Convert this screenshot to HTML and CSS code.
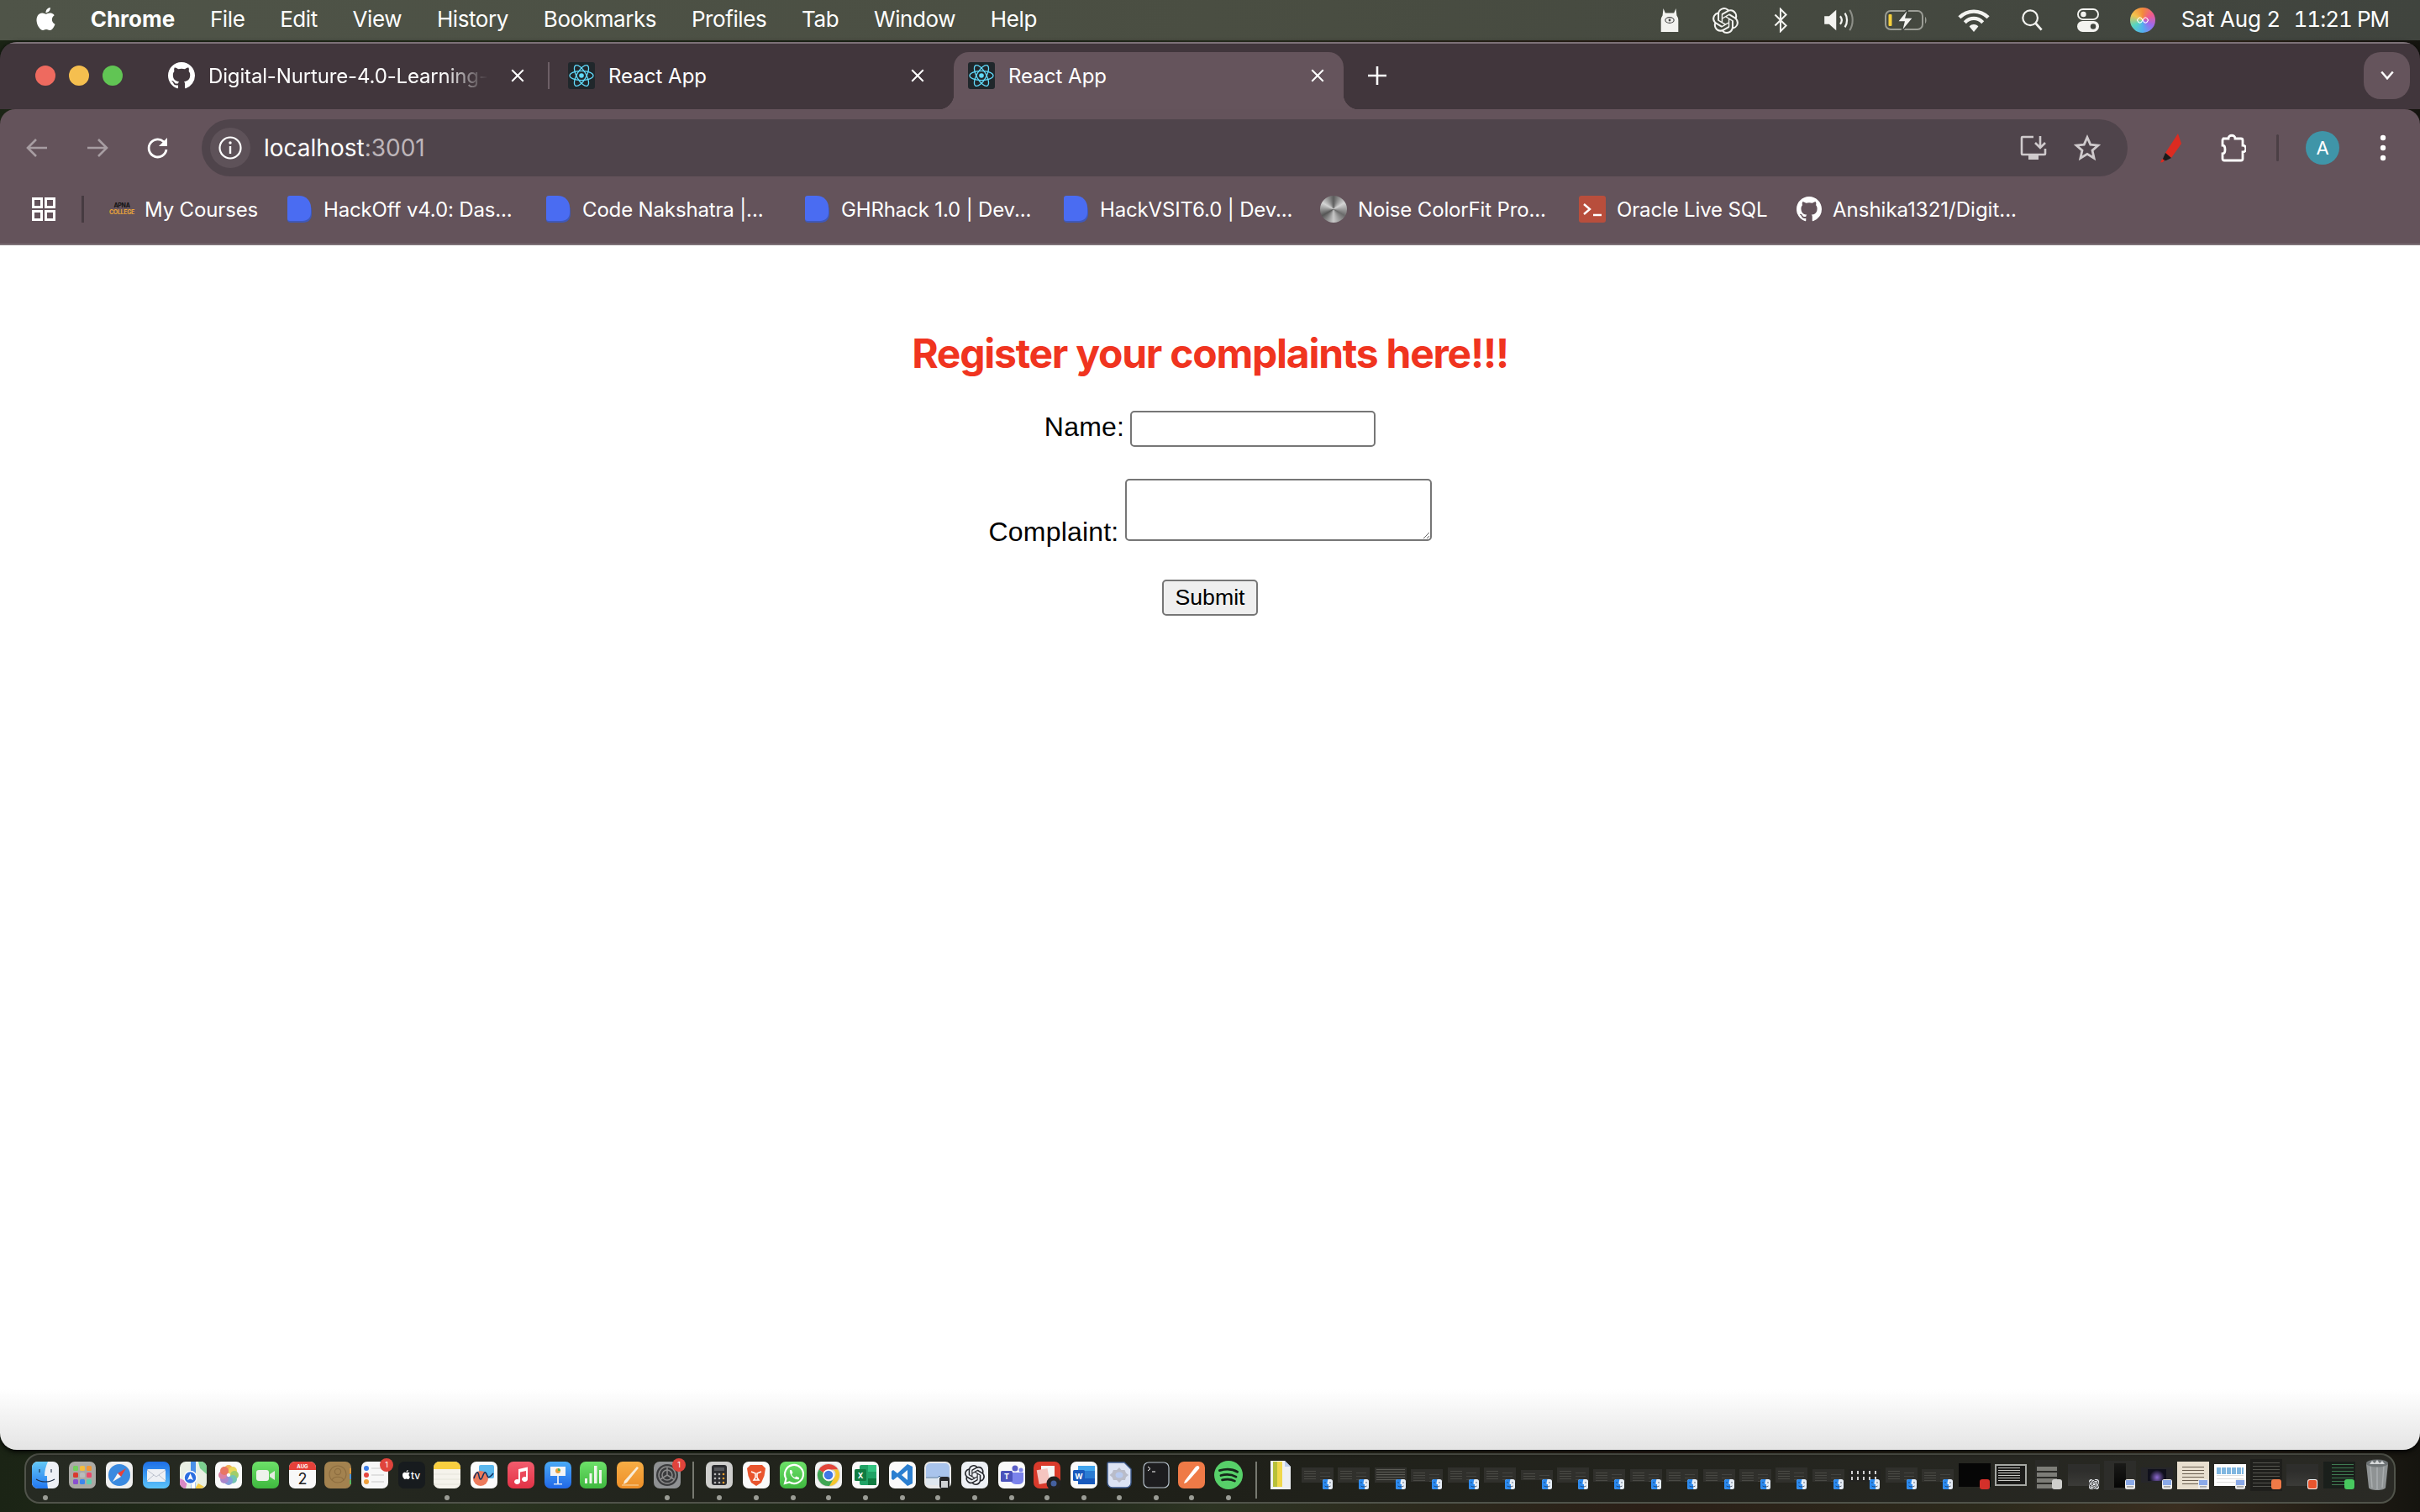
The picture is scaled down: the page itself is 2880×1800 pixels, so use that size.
FILE: index.html
```html
<!DOCTYPE html>
<html lang="en">
<head>
<meta charset="utf-8">
<title>React App</title>
<link rel="stylesheet" href="styles.css">
</head>
<body>
<svg class="defs" width="0" height="0" aria-hidden="true">
  <defs>
    <symbol id="gh" viewBox="0 0 16 16"><path fill="currentColor" d="M8 0C3.58 0 0 3.58 0 8c0 3.54 2.29 6.53 5.47 7.59.4.07.55-.17.55-.38 0-.19-.01-.82-.01-1.49-2.01.37-2.53-.49-2.69-.94-.09-.23-.48-.94-.82-1.13-.28-.15-.68-.52-.01-.53.63-.01 1.08.58 1.23.82.72 1.21 1.87.87 2.33.66.07-.52.28-.87.51-1.07-1.78-.2-3.64-.89-3.64-3.95 0-.87.31-1.59.82-2.15-.08-.2-.36-1.02.08-2.12 0 0 .67-.21 2.2.82.64-.18 1.32-.27 2-.27.68 0 1.36.09 2 .27 1.53-1.04 2.2-.82 2.2-.82.44 1.1.16 1.92.08 2.12.51.56.82 1.27.82 2.15 0 3.07-1.87 3.75-3.65 3.95.29.25.54.73.54 1.48 0 1.07-.01 1.93-.01 2.2 0 .21.15.46.55.38A8.013 8.013 0 0016 8c0-4.42-3.58-8-8-8z"/></symbol>
    <symbol id="react" viewBox="0 0 32 32"><rect width="32" height="32" rx="3" fill="#20272b"/><g fill="none" stroke="#61dafb" stroke-width="1.3"><ellipse cx="16" cy="16" rx="14" ry="5.6"/><ellipse cx="16" cy="16" rx="14" ry="5.6" transform="rotate(60 16 16)"/><ellipse cx="16" cy="16" rx="14" ry="5.6" transform="rotate(120 16 16)"/></g><circle cx="16" cy="16" r="2.8" fill="#61dafb"/></symbol>
    <symbol id="doc" viewBox="0 0 30 32"><path fill="#3f58b8" d="M0 4h14c9 0 15 6 15 14v4c0 6-4 10-10 10H4c-2 0-4-1-4-3z"/><path fill="#4a6cf2" d="M3 0h11c8 0 14 6 14 14v6c0 6-4 10-10 10H3c-2 0-3-1-3-3V3c0-2 1-3 3-3z"/></symbol>
    <symbol id="x" viewBox="0 0 16 16"><path d="M2 2l12 12M14 2L2 14" stroke="currentColor" stroke-width="1.800" fill="none"/></symbol>
    <symbol id="apple" viewBox="0 0 24 24"><path fill="currentColor" d="M12.152 6.896c-.948 0-2.415-1.078-3.96-1.04-2.04.027-3.91 1.183-4.961 3.014-2.117 3.675-.546 9.103 1.519 12.09 1.013 1.454 2.208 3.09 3.792 3.039 1.52-.065 2.09-.987 3.935-.987 1.831 0 2.35.987 3.96.948 1.637-.026 2.676-1.48 3.676-2.948 1.156-1.688 1.636-3.325 1.662-3.415-.039-.013-3.182-1.221-3.22-4.857-.026-3.04 2.48-4.494 2.597-4.559-1.429-2.09-3.623-2.324-4.39-2.376-2-.156-3.675 1.09-4.61 1.09zM15.53 3.83c.843-1.012 1.4-2.427 1.245-3.83-1.207.052-2.662.805-3.532 1.818-.78.896-1.454 2.338-1.273 3.714 1.338.104 2.715-.688 3.559-1.701"/></symbol>
    <symbol id="gpt" viewBox="0 0 24 24"><path fill="currentColor" d="M22.2819 9.8211a5.9847 5.9847 0 0 0-.5157-4.9108 6.0462 6.0462 0 0 0-6.5098-2.9A6.0651 6.0651 0 0 0 4.9807 4.1818a5.9847 5.9847 0 0 0-3.9977 2.9 6.0462 6.0462 0 0 0 .7427 7.0966 5.98 5.98 0 0 0 .511 4.9107 6.051 6.051 0 0 0 6.5146 2.9001A5.9847 5.9847 0 0 0 13.2599 24a6.0557 6.0557 0 0 0 5.7718-4.2058 5.9894 5.9894 0 0 0 3.9977-2.9001 6.0557 6.0557 0 0 0-.7475-7.0729zm-9.022 12.6081a4.4755 4.4755 0 0 1-2.8764-1.0408l.1419-.0804 4.7783-2.7582a.7948.7948 0 0 0 .3927-.6813v-6.7369l2.02 1.1686a.071.071 0 0 1 .038.052v5.5826a4.504 4.504 0 0 1-4.4945 4.4944zm-9.6607-4.1254a4.4708 4.4708 0 0 1-.5346-3.0137l.142.0852 4.783 2.7582a.7712.7712 0 0 0 .7806 0l5.8428-3.3685v2.3324a.0804.0804 0 0 1-.0332.0615L9.74 19.9502a4.4992 4.4992 0 0 1-6.1408-1.6464zM2.3408 7.8956a4.485 4.485 0 0 1 2.3655-1.9728V11.6a.7664.7664 0 0 0 .3879.6765l5.8144 3.3543-2.0201 1.1685a.0757.0757 0 0 1-.071 0l-4.8303-2.7865A4.504 4.504 0 0 1 2.3408 7.872zm16.5963 3.8558L13.1038 8.364 15.1192 7.2a.0757.0757 0 0 1 .071 0l4.8303 2.7913a4.4944 4.4944 0 0 1-.6765 8.1042v-5.6772a.79.79 0 0 0-.407-.667zm2.0107-3.0231l-.142-.0852-4.7735-2.7818a.7759.7759 0 0 0-.7854 0L9.409 9.2297V6.8974a.0662.0662 0 0 1 .0284-.0615l4.8303-2.7866a4.4992 4.4992 0 0 1 6.6802 4.66zM8.3065 12.863l-2.02-1.1638a.0804.0804 0 0 1-.038-.0567V6.0742a4.4992 4.4992 0 0 1 7.3757-3.4537l-.142.0805L8.704 5.459a.7948.7948 0 0 0-.3927.6813zm1.0976-2.3654l2.602-1.4998 2.6069 1.4998v2.9994l-2.5974 1.4997-2.6067-1.4997Z"/></symbol>
    <symbol id="mini-finder" viewBox="0 0 12 12"><rect width="12" height="12" rx="2.500" fill="#e6edf6"/><path d="M2.500 0h4C5.800 2 5.500 4 5.500 6H7c0 2 0 4 .3 6H2.500A2.500 2.500 0 0 1 0 9.500v-7A2.500 2.500 0 0 1 2.500 0z" fill="#2b8af0"/><path d="M3 3v1.800M9 3v1.800M2.500 8c2 1.300 5 1.300 7 0" stroke="#1c2b44" stroke-width=".7" fill="none"/></symbol>
    <symbol id="mini-preview" viewBox="0 0 12 12"><rect width="12" height="12" rx="2.500" fill="#eeeeee"/><rect x="1" y="1" width="10" height="6" fill="#8aa9e8"/><path d="M2 8.500h8M2 10h8" stroke="#888" stroke-width=".7"/></symbol>
    <linearGradient id="g-finder" x1="0" y1="0" x2="0" y2="1"><stop offset="0" stop-color="#64c8f6"/><stop offset="1" stop-color="#2277f0"/></linearGradient>
    <linearGradient id="g-mail" x1="0" y1="0" x2="0" y2="1"><stop offset="0" stop-color="#1d6fe8"/><stop offset="1" stop-color="#5cc4fa"/></linearGradient>
    <linearGradient id="g-green" x1="0" y1="0" x2="0" y2="1"><stop offset="0" stop-color="#6de069"/><stop offset="1" stop-color="#3fb83f"/></linearGradient>
    <linearGradient id="g-music" x1="0" y1="0" x2="0" y2="1"><stop offset="0" stop-color="#f35c6d"/><stop offset="1" stop-color="#e23246"/></linearGradient>
    <linearGradient id="g-key" x1="0" y1="0" x2="0" y2="1"><stop offset="0" stop-color="#4aaaf5"/><stop offset="1" stop-color="#2168e8"/></linearGradient>
    <linearGradient id="g-pages" x1="0" y1="0" x2="0" y2="1"><stop offset="0" stop-color="#f6ad45"/><stop offset="1" stop-color="#ee8f28"/></linearGradient>
  </defs>
</svg>

<header class="menubar">
  <div class="menu-left">
    <svg class="apple"><use href="#apple"/></svg>
    <span class="menu-app">Chrome</span>
    <span>File</span><span>Edit</span><span>View</span><span>History</span><span>Bookmarks</span><span>Profiles</span><span>Tab</span><span>Window</span><span>Help</span>
  </div>
  <div class="menu-right">
    <div class="status-icons">
      <svg class="st" viewBox="0 0 24 32"><path fill="#f3f3f0" d="M4 1l2.500 6h11L20 1l1 9c1.500 2 2 4 2 6v15H1V16c0-2 .5-4 2-6z"/><ellipse cx="12" cy="16" rx="5.500" ry="3.600" fill="none" stroke="#444" stroke-width="1.200"/><circle cx="12" cy="16" r="1.500" fill="#444"/></svg>
      <svg class="st st-gpt"><use href="#gpt"/></svg>
      <svg class="st" viewBox="0 0 20 32"><path d="M3 9l14 14-7 7V2l7 7L3 23" fill="none" stroke="#f3f3f0" stroke-width="2.200"/></svg>
      <svg class="st st-wide" viewBox="0 0 40 32"><path fill="#f3f3f0" d="M1 11h6l9-8v26l-9-8H1z"/><path d="M21 11c2.500 3 2.500 7 0 10M27 7c3.500 5 3.500 13 0 18" fill="none" stroke="#f3f3f0" stroke-width="2.400"/><path d="M33 3c5 7.500 5 18.500 0 26" fill="none" stroke="#8d8f88" stroke-width="2.200"/></svg>
      <svg class="st st-batt" viewBox="0 0 52 28"><rect x="1" y="3" width="44" height="22" rx="6" fill="none" stroke="#9b9d96" stroke-width="2"/><path d="M48 10c2 1 2 7 0 8z" fill="#9b9d96"/><rect x="4.500" y="7" width="4" height="14" rx="1" fill="#f5cf3c"/><path d="M28 0L15 16h8l-3 12 14-17h-9z" fill="#f3f3f0" stroke="#41453f" stroke-width="1.500"/></svg>
      <svg class="st st-wide" viewBox="0 0 36 28"><path d="M2 11c9-9 23-9 32 0M8 16.500c6-6 14-6 20 0" fill="none" stroke="#f3f3f0" stroke-width="4"/><path d="M13 21c3-3 7-3 10 0l-5 6z" fill="#f3f3f0"/></svg>
      <svg class="st" viewBox="0 0 28 30"><circle cx="12" cy="12" r="9.500" fill="none" stroke="#f3f3f0" stroke-width="2.400"/><path d="M19 19l7.500 8.500" stroke="#f3f3f0" stroke-width="3"/></svg>
      <svg class="st" viewBox="0 0 28 30"><rect x="1" y="1" width="26" height="13" rx="6.500" fill="none" stroke="#f3f3f0" stroke-width="2"/><circle cx="8" cy="7.500" r="3.500" fill="#f3f3f0"/><rect x="0" y="16" width="28" height="14" rx="7" fill="#f3f3f0"/><circle cx="20.500" cy="23" r="3.500" fill="#41453f"/></svg>
      <span class="siri"><svg viewBox="0 0 20 20"><path d="M4 10c2-4 4-4 6 0s4 4 6 0c-2-4-4-4-6 0s-4 4-6 0z" fill="none" stroke="#fff" stroke-width="1"/></svg></span>
    </div>
    <span class="clock"><span class="date">Sat Aug 2</span><span class="time">11:21 PM</span></span>
  </div>
</header>

<div class="window">
  <div class="tabstrip">
    <div class="lights"><span class="light red"></span><span class="light yellow"></span><span class="light green"></span></div>
    <div class="tabs">
      <div class="tab">
        <svg class="fav gh-mark"><use href="#gh"/></svg>
        <span class="tab-title"><span class="fade">Digital-Nurture-4.0-Learning-</span></span>
        <svg class="close"><use href="#x"/></svg>
      </div>
      <span class="tab-sep"></span>
      <div class="tab">
        <svg class="fav"><use href="#react"/></svg>
        <span class="tab-title">React App</span>
        <svg class="close"><use href="#x"/></svg>
      </div>
      <span class="tab-sep off"></span>
      <div class="tab active">
        <svg class="fav"><use href="#react"/></svg>
        <span class="tab-title">React App</span>
        <svg class="close"><use href="#x"/></svg>
      </div>
    </div>
    <svg class="newtab" viewBox="0 0 22 22"><path d="M11 0v22M0 11h22" stroke="#fff" stroke-width="2.600"/></svg>
    <div class="tabsearch"><svg viewBox="0 0 16 12"><path d="M2 2l6 7 6-7" fill="none" stroke="#fff" stroke-width="2.200"/></svg></div>
  </div>

  <div class="toolbar">
    <div class="nav">
      <svg viewBox="0 0 32 32"><path d="M28 16H5M15 6L5 16l10 10" fill="none" stroke="#a79da2" stroke-width="2.600"/></svg>
      <svg viewBox="0 0 32 32"><path d="M4 16h23M17 6l10 10-10 10" fill="none" stroke="#a79da2" stroke-width="2.600"/></svg>
      <svg viewBox="0 0 32 32"><path d="M26 18a10.500 10.500 0 1 1-3.500-9.500L26 12" fill="none" stroke="#fff" stroke-width="2.800"/><path d="M27 4v10H17z" fill="#fff"/></svg>
    </div>
    <div class="omnibox">
      <span class="chip"><svg viewBox="0 0 28 28"><circle cx="14" cy="14" r="12.500" fill="none" stroke="#fff" stroke-width="2.200"/><path d="M14 12v9" stroke="#fff" stroke-width="2.400"/><circle cx="14" cy="8" r="1.700" fill="#fff"/></svg></span>
      <span class="url">localhost<span class="port">:3001</span></span>
      <svg class="omni-icon" viewBox="0 0 32 32"><path d="M16 3H3a1 1 0 0 0-1 1v19a1 1 0 0 0 1 1h26a1 1 0 0 0 1-1v-6" fill="none" stroke="#cfcacc" stroke-width="2.600"/><rect x="10" y="24" width="12" height="6" fill="#cfcacc"/><path d="M24 2v13M18 10l6 6 6-6" fill="none" stroke="#cfcacc" stroke-width="2.600"/></svg>
      <svg class="omni-icon" viewBox="0 0 32 32"><path d="M16 3.500l3.800 8.600 9.200.9-7 6.100 2.100 9.200-8.100-4.900-8.100 4.900 2.100-9.200-7-6.100 9.200-.9z" fill="none" stroke="#cfcacc" stroke-width="2.800"/></svg>
    </div>
    <div class="tools">
      <svg viewBox="3 0 32 36"><path d="M27 1l4 12-12 17-7-6z" fill="#dc2b21"/><path d="M12 24l7 6-6 3-5 .5z" fill="#1a1a1a"/><path d="M8 31l3 1.500-2 2.500-3 .5z" fill="#dc2b21"/></svg>
      <svg viewBox="0 0 32 36"><path d="M4 7h7c0-5 8-5 8 0h7a2 2 0 0 1 2 2v6c5 0 5 8 0 8v8a2 2 0 0 1-2 2H6a2 2 0 0 1-2-2v-6c4 0 4-10 0-10V9a2 2 0 0 1 2-2z" fill="none" stroke="#fff" stroke-width="2.800"/></svg>
      <span class="tool-div"></span>
      <span class="avatar">A</span>
      <svg class="kebab" viewBox="0 0 8 32"><circle cx="4" cy="4" r="3.200" fill="#fff"/><circle cx="4" cy="16" r="3.200" fill="#fff"/><circle cx="4" cy="28" r="3.200" fill="#fff"/></svg>
    </div>
  </div>

  <div class="bookmarks">
    <svg class="apps" viewBox="0 0 28 28"><g fill="none" stroke="#fff" stroke-width="3"><rect x="1.500" y="1.500" width="10" height="10"/><rect x="16.500" y="1.500" width="10" height="10"/><rect x="1.500" y="16.500" width="10" height="10"/><rect x="16.500" y="16.500" width="10" height="10"/></g></svg>
    <span class="bm-div"></span>
    <div class="bm bm-first"><span class="apna"><span class="apna-top">APNA</span><span class="apna-bot">COLLEGE</span></span><span>My Courses</span></div>
    <div class="bm"><svg class="bm-ic"><use href="#doc"/></svg><span>HackOff v4.0: Das...</span></div>
    <div class="bm"><svg class="bm-ic"><use href="#doc"/></svg><span>Code Nakshatra |...</span></div>
    <div class="bm"><svg class="bm-ic"><use href="#doc"/></svg><span>GHRhack 1.0 | Dev...</span></div>
    <div class="bm bm-short"><svg class="bm-ic"><use href="#doc"/></svg><span>HackVSIT6.0 | Dev...</span></div>
    <div class="bm"><span class="disc"></span><span>Noise ColorFit Pro...</span></div>
    <div class="bm bm-oracle"><span class="oracle"><svg viewBox="0 0 32 32"><path d="M6 10l7 6-7 6" fill="none" stroke="#fff" stroke-width="2.400"/><path d="M17 23h10" stroke="#fff" stroke-width="2.400"/></svg></span><span>Oracle Live SQL</span></div>
    <div class="bm bm-last"><svg class="bm-ic gh-mark"><use href="#gh"/></svg><span>Anshika1321/Digit...</span></div>
  </div>

  <main class="page">
    <h1 class="title">Register your complaints here!!!</h1>
    <form class="form">
      <div class="row row-name"><label>Name: <input class="field" type="text"></label></div>
      <div class="row row-complaint"><label>Complaint: <textarea class="area"></textarea></label></div>
      <button class="submit" type="button">Submit</button>
    </form>
  </main>
</div>

<footer class="dock">
  <div class="item on"><svg class="ic" viewBox="0 0 32 32"><rect width="32" height="32" rx="7" fill="#eef1f6"/><path d="M7 0h12c-2.500 6-4 11-4 17h3c0 6 .3 10 1 15H7a7 7 0 0 1-7-7V7a7 7 0 0 1 7-7z" fill="url(#g-finder)"/><path d="M9 9v4M23 9v4M5 21c6 4 16 4 22 0" stroke="#1d2c44" stroke-width="1.100" fill="none"/></svg><i></i></div>
  <div class="item"><svg class="ic" viewBox="0 0 32 32"><rect width="32" height="32" rx="7" fill="#aaaaa5"/><rect x="5" y="5" width="6" height="6" rx="1.500" fill="#72cf5d"/><rect x="13" y="5" width="6" height="6" rx="1.500" fill="#f3bd3f"/><rect x="21" y="5" width="6" height="6" rx="1.500" fill="#ef9636"/><rect x="5" y="13" width="6" height="6" rx="1.500" fill="#d9392f"/><rect x="13" y="13" width="6" height="6" rx="1.500" fill="#b9bcbc"/><rect x="21" y="13" width="6" height="6" rx="1.500" fill="#e9496a"/><rect x="5" y="21" width="6" height="6" rx="1.500" fill="#8a4fd0"/><rect x="13" y="21" width="6" height="6" rx="1.500" fill="#3c86ee"/><rect x="21" y="21" width="6" height="6" rx="1.500" fill="#5ed0b0"/></svg><i class="off"></i></div>
  <div class="item"><svg class="ic" viewBox="0 0 32 32"><rect width="32" height="32" rx="7" fill="#f0f0f0"/><circle cx="16" cy="16" r="13" fill="#3a8ae0"/><path d="M24 8l-10 6 4 4z" fill="#e8413a"/><path d="M8 24l10-6-4-4z" fill="#f5f5f5"/></svg><i class="off"></i></div>
  <div class="item"><svg class="ic" viewBox="0 0 32 32"><rect width="32" height="32" rx="7" fill="url(#g-mail)"/><rect x="5" y="9" width="22" height="15" rx="1.500" fill="#eef0f4"/><path d="M5 10l11 8 11-8M5 23l8-7M27 23l-8-7" fill="none" stroke="#b5bcc8" stroke-width=".9"/></svg><i class="off"></i></div>
  <div class="item"><svg class="ic" viewBox="0 0 32 32"><rect width="32" height="32" rx="7" fill="#e9f0e4"/><path d="M22 0h3a7 7 0 0 1 7 7v8L24 8z" fill="#7bcf8f"/><path d="M0 20l9 4-2 8a7 7 0 0 1-7-7z" fill="#d988c5"/><path d="M18 32l4-6 7 4-4 2z" fill="#f3cc46"/><path d="M13 0h6v32h-6z" fill="#4a90e8"/><path d="M16 32V22" stroke="#fff" stroke-width="5"/><circle cx="12.500" cy="19" r="7.500" fill="#2b6fe0" stroke="#fff" stroke-width="1.500"/><path d="M12.500 14l3.500 8-3.500-1.500L9 22z" fill="#fff"/></svg><i class="off"></i></div>
  <div class="item tight"><svg class="ic" viewBox="0 0 32 32"><rect width="32" height="32" rx="7" fill="#fafafa"/><g opacity=".85"><circle cx="16" cy="9" r="5" fill="#f1a53c"/><circle cx="21" cy="11" r="5" fill="#e8d13f"/><circle cx="23" cy="16" r="5" fill="#92c652"/><circle cx="21" cy="21" r="5" fill="#5cbba7"/><circle cx="16" cy="23" r="5" fill="#6d8fd7"/><circle cx="11" cy="21" r="5" fill="#9b72c4"/><circle cx="9" cy="16" r="5" fill="#d66b94"/><circle cx="11" cy="11" r="5" fill="#e55f4a"/></g></svg><i class="off"></i></div>
  <div class="item"><svg class="ic" viewBox="0 0 32 32"><rect width="32" height="32" rx="7" fill="url(#g-green)"/><rect x="5" y="10" width="15" height="13" rx="3" fill="#eef3ec"/><path d="M21 15l6-4v11l-6-4z" fill="#e4ebe2"/></svg><i class="off"></i></div>
  <div class="item"><svg class="ic" viewBox="0 0 32 32"><rect width="32" height="32" rx="7" fill="#f8f8f8"/><path d="M7 0h18a7 7 0 0 1 7 7v3H0V7a7 7 0 0 1 7-7z" fill="#e5413a"/><text class="cal-m" x="16" y="8" text-anchor="middle">AUG</text><text class="cal-d" x="16" y="27" text-anchor="middle">2</text></svg><i class="off"></i></div>
  <div class="item tight"><svg class="ic" viewBox="0 0 32 32"><rect width="32" height="32" rx="7" fill="#a3824f"/><rect x="30" y="8" width="2" height="6" fill="#e29a3c"/><rect x="30" y="15" width="2" height="6" fill="#4c95d8"/><rect x="30" y="22" width="2" height="5" fill="#5cb860"/><circle cx="16" cy="15" r="10" fill="none" stroke="#8d6e40" stroke-width="1.200"/><circle cx="16" cy="12" r="3.600" fill="none" stroke="#8d6e40" stroke-width="1.200"/><path d="M9 22c2-5 12-5 14 0" fill="none" stroke="#8d6e40" stroke-width="1.200"/></svg><i class="off"></i></div>
  <div class="item"><svg class="ic" viewBox="0 0 32 32"><rect width="32" height="32" rx="7" fill="#f7f7f7"/><circle cx="6" cy="8" r="3" fill="#3d7ee8"/><circle cx="6" cy="16" r="3" fill="#e5453f"/><circle cx="6" cy="24" r="3" fill="#ef9f3b"/><path d="M12 8h15M12 16h15M12 24h15" stroke="#c9c9c9" stroke-width="1"/></svg><i class="off"></i><span class="badge">1</span></div>
  <div class="item"><svg class="ic" viewBox="0 0 32 32"><rect width="32" height="32" rx="7" fill="#171b1e"/><svg x="4" y="9" width="11" height="13" viewBox="0 0 24 24"><use href="#apple" color="#fff"/></svg><text class="tv" x="15" y="21">tv</text></svg><i class="off"></i></div>
  <div class="item tight on"><svg class="ic" viewBox="0 0 32 32"><rect width="32" height="32" rx="7" fill="#f5f3ec"/><path d="M7 0h18a7 7 0 0 1 7 7v2H0V7a7 7 0 0 1 7-7z" fill="#f9cf3f"/><path d="M0 15h32M0 21h32M0 27h32" stroke="#e1dfd8" stroke-width=".8"/></svg><i></i></div>
  <div class="item"><svg class="ic" viewBox="0 0 32 32"><rect width="32" height="32" rx="7" fill="#fbfbfb"/><rect x="10" y="4" width="18" height="16" rx="2" fill="#5bb8ee"/><circle cx="12" cy="20" r="9" fill="#ec7a5c"/><path d="M4 20c3-9 5-9 6-3s3 5 5-1 4-2 5 1 4 1 7-3" fill="none" stroke="#12305f" stroke-width="1.500"/></svg><i class="off"></i></div>
  <div class="item"><svg class="ic" viewBox="0 0 32 32"><rect width="32" height="32" rx="7" fill="url(#g-music)"/><path d="M13 9l11-2.500V21a3.500 3 0 1 1-2-2.700V11l-7 1.600V24a3.500 3 0 1 1-2-2.700z" fill="#fff"/></svg><i class="off"></i></div>
  <div class="item"><svg class="ic" viewBox="0 0 32 32"><rect width="32" height="32" rx="7" fill="url(#g-key)"/><rect x="7" y="6" width="18" height="11" fill="#f5f5f5"/><circle cx="16" cy="11" r="3" fill="#e8a03c"/><path d="M16 8v3h3a3 3 0 0 0-3-3z" fill="#4cb25a"/><path d="M15 17h2v9h-2zM11 26h10v1.500H11z" fill="#d8e2f2"/></svg><i class="off"></i></div>
  <div class="item tight"><svg class="ic" viewBox="0 0 32 32"><rect width="32" height="32" rx="7" fill="url(#g-green)"/><path d="M6 26v-6h3v6zM11.500 26V14h3v12zM17 26V5h3.500v21zM23 26V10h3v16z" fill="#f0f5ec"/></svg><i class="off"></i></div>
  <div class="item"><svg class="ic" viewBox="0 0 32 32"><rect width="32" height="32" rx="7" fill="url(#g-pages)"/><path d="M24 6l2 1.500L12 25l-4 2 1-4z" fill="#f8ecd8"/><path d="M6 28h20" stroke="#f8d8a8" stroke-width="1"/></svg><i class="off"></i></div>
  <div class="item on"><svg class="ic" viewBox="0 0 32 32"><rect width="32" height="32" rx="7" fill="#8f9193"/><circle cx="16" cy="16" r="13" fill="#3a3b3d"/><circle cx="16" cy="16" r="10" fill="none" stroke="#8c8c8c" stroke-width="1.500"/><circle cx="16" cy="16" r="6" fill="none" stroke="#8c8c8c" stroke-width="1.500"/><path d="M16 16V7M16 16l-8 5M16 16l8 5" stroke="#8c8c8c" stroke-width="1.500"/></svg><i></i><span class="badge">1</span></div>
  <span class="dock-sep"></span>
  <div class="item on"><svg class="ic" viewBox="0 0 32 32"><rect width="32" height="32" rx="7" fill="#cfcfcd"/><rect x="7" y="4" width="18" height="24" rx="3" fill="#2c2d30"/><rect x="10" y="7" width="12" height="4" fill="#55575a"/><g fill="#b8b8b8"><circle cx="11" cy="15" r="1.300"/><circle cx="16" cy="15" r="1.300"/><circle cx="11" cy="20" r="1.300"/><circle cx="16" cy="20" r="1.300"/><circle cx="11" cy="25" r="1.300"/><circle cx="16" cy="25" r="1.300"/></g><g fill="#f0a030"><circle cx="21" cy="15" r="1.300"/><circle cx="21" cy="20" r="1.300"/><circle cx="21" cy="25" r="1.300"/></g></svg><i></i></div>
  <div class="item on"><svg class="ic" viewBox="0 0 32 32"><rect width="32" height="32" rx="7" fill="#fafafa"/><path d="M9 4h14l4 4-1.500 9L22 25l-6 4-6-4-3.500-8L5 8z" fill="#e9552e"/><path d="M10 12l5 2v5l-2 3h6l-2-3v-5l5-2" fill="none" stroke="#fff" stroke-width="1.500"/></svg><i></i></div>
  <div class="item on"><svg class="ic" viewBox="0 0 32 32"><rect width="32" height="32" rx="7" fill="url(#g-green)"/><path d="M6 26l1.500-5.500A11 11 0 1 1 11.500 24.500z" fill="none" stroke="#fff" stroke-width="2.200"/><path d="M12 10l2 0 1.500 3.500-1.500 1.500c1 2 2 3 4 4l1.500-1.500 3.500 1.500v2c-5 2-12-5-11-11z" fill="#fff"/></svg><i></i></div>
  <div class="item tight on"><svg class="ic" viewBox="0 0 32 32"><rect width="32" height="32" rx="7" fill="#f2f2f2"/><circle cx="16" cy="16" r="14" fill="#d8d8d8"/><path d="M16 3a13 13 0 0 1 11.300 6.500H16a6.500 6.500 0 0 0-6 4L4.700 9.500A13 13 0 0 1 16 3z" fill="#e2453a"/><path d="M27.300 9.500A13 13 0 0 1 17 29l5.600-9.600A6.500 6.500 0 0 0 21.600 9.500z" fill="#f5c62c"/><path d="M4.700 9.500A13 13 0 0 0 17 29l5.600-9.600a6.500 6.500 0 0 1-12.500-5.900z" fill="#3fa653"/><circle cx="16" cy="16" r="6.800" fill="#fff"/><circle cx="16" cy="16" r="5.300" fill="#3f78e6"/></svg><i></i></div>
  <div class="item on"><svg class="ic" viewBox="0 0 32 32"><rect width="32" height="32" rx="7" fill="#fafafa"/><rect x="9" y="4" width="20" height="24" rx="2" fill="#21a366"/><rect x="19" y="4" width="10" height="8" fill="#33c481"/><rect x="19" y="20" width="10" height="8" fill="#107c41"/><rect x="3" y="9" width="14" height="14" rx="1.500" fill="#107c41"/><text class="tile-l" x="10" y="20" text-anchor="middle">X</text></svg><i></i></div>
  <div class="item on"><svg class="ic" viewBox="0 0 32 32"><rect width="32" height="32" rx="7" fill="#fafafa"/><path d="M22 3l6 3v20l-6 3L10 18l-5 4-2-1.500v-9L5 10l5 4z" fill="#2b7fd0"/><path d="M22 10l-7 6 7 6z" fill="#fafafa"/></svg><i></i></div>
  <div class="item tight on"><svg class="ic" viewBox="0 0 32 32"><rect width="32" height="32" rx="7" fill="#e9e9e9"/><rect x="2" y="2" width="28" height="26" rx="5" fill="#a9c4ec"/><rect x="2" y="18" width="28" height="10" fill="#dfe7ef"/><path d="M2 19h14l2-2 2 2h10" stroke="#3f6a9a" fill="none"/><rect x="18" y="18" width="12" height="14" rx="3" fill="#26272a"/><rect x="20" y="23" width="8" height="8" fill="#cfd1d4"/></svg><i></i></div>
  <div class="item on"><svg class="ic" viewBox="0 0 32 32"><rect width="32" height="32" rx="7" fill="#eef1f5"/><svg x="4" y="4" width="24" height="24" color="#24262b"><use href="#gpt"/></svg></svg><i></i></div>
  <div class="item on"><svg class="ic" viewBox="0 0 32 32"><rect width="32" height="32" rx="7" fill="#fafafa"/><circle cx="20" cy="8" r="3.500" fill="#5b5fc7"/><circle cx="27" cy="10" r="2.500" fill="#7b83eb"/><path d="M14 13h16v9a5 5 0 0 1-5 5h-4a7 7 0 0 1-7-7z" fill="#7b83eb"/><rect x="3" y="11" width="14" height="13" rx="1.500" fill="#4b53bc"/><text class="tile-l" x="10" y="21" text-anchor="middle">T</text></svg><i></i></div>
  <div class="item tight on"><svg class="ic" viewBox="0 0 32 32"><rect width="32" height="32" rx="7" fill="#d93a2b"/><rect x="9" y="5" width="16" height="20" fill="#f5f5f5"/><rect x="5" y="9" width="13" height="17" fill="#f5c5c0" transform="rotate(-10 11 17)"/><circle cx="24" cy="26" r="8.500" fill="#222"/><circle cx="24" cy="26" r="3.500" fill="#4460a0"/></svg><i></i></div>
  <div class="item on"><svg class="ic" viewBox="0 0 32 32"><rect width="32" height="32" rx="7" fill="#fafafa"/><rect x="9" y="5" width="20" height="22" rx="2" fill="#2b7cd3"/><rect x="9" y="5" width="20" height="6" fill="#41a5ee"/><rect x="9" y="20" width="20" height="7" fill="#185abd"/><rect x="3" y="10" width="14" height="13" rx="1.500" fill="#185abd"/><text class="tile-l" x="10" y="20.500" text-anchor="middle">W</text></svg><i></i></div>
  <div class="item tight on"><svg class="ic" viewBox="0 0 32 32"><path d="M3 1h19l8 8v16a6 6 0 0 1-6 6H8a6 6 0 0 1-6-6V2z" fill="#dce3f4" stroke="#3d5a8c" stroke-width="1.400"/><path d="M16 7l2.500 3h4l1.500 3.500 3 2.500-3 2.500L23 22h-4l-3 3-3-3H9l-1.500-3.500L4.500 16l3-2.500L9 10h4z" fill="#b9bcc9"/><ellipse cx="16" cy="16" rx="4.500" ry="3.500" fill="#b7c9ee"/></svg><i></i></div>
  <div class="item on"><svg class="ic" viewBox="0 0 32 32"><rect x="1" y="1" width="30" height="30" rx="6" fill="#1d1d1f" stroke="#b5c0ca" stroke-width="1.200"/><path d="M6 6l3 2.500L6 11" fill="none" stroke="#fff" stroke-width="1"/><path d="M11 12h4" stroke="#fff" stroke-width="1"/></svg><i></i></div>
  <div class="item tight on"><svg class="ic" viewBox="0 0 32 32"><rect width="32" height="32" rx="7" fill="#ef7a47"/><path d="M23 5c2 0 3 2 2 3.500L14 21l-4 4-3 1 1-3 3-4L21 6z" fill="#fff"/></svg><i></i></div>
  <div class="item on"><svg class="ic ic-round" viewBox="0 0 32 32"><circle cx="16" cy="16" r="16" fill="#57d069"/><path d="M6 11c7-2 14-2 20 1.500M7.500 16.500c6-1.600 12-1.200 17 1.500M9 21.500c5-1.200 10-1 14 1.200" fill="none" stroke="#16261a" stroke-width="2.600" stroke-linecap="round"/></svg><i></i></div>
  <span class="dock-sep wide"></span>
  <svg class="zipdoc" viewBox="0 0 26 36"><path d="M1 1h17l7 7v27H1z" fill="#eef0f2"/><rect x="4" y="2" width="5" height="30" fill="#b7c03a"/><rect x="9" y="2" width="6" height="30" fill="#f0d84a"/><path d="M18 1v7h7" fill="#bccdea"/></svg>
  <div class="thumbs">
    <div class="thumb"><span class="shot"></span><svg class="mini"><use href="#mini-finder"/></svg></div>
    <div class="thumb"><span class="shot"></span><svg class="mini"><use href="#mini-finder"/></svg></div>
    <div class="thumb"><span class="shot dense"></span><svg class="mini"><use href="#mini-finder"/></svg></div>
    <div class="thumb"><span class="shot low"></span><svg class="mini"><use href="#mini-finder"/></svg></div>
    <div class="thumb"><span class="shot"></span><svg class="mini"><use href="#mini-finder"/></svg></div>
    <div class="thumb"><span class="shot"></span><svg class="mini"><use href="#mini-finder"/></svg></div>
    <div class="thumb"><span class="shot lower"></span><svg class="mini"><use href="#mini-finder"/></svg></div>
    <div class="thumb"><span class="shot"></span><svg class="mini"><use href="#mini-finder"/></svg></div>
    <div class="thumb"><span class="shot low"></span><svg class="mini"><use href="#mini-finder"/></svg></div>
    <div class="thumb"><span class="shot low"></span><svg class="mini"><use href="#mini-finder"/></svg></div>
    <div class="thumb"><span class="shot low"></span><svg class="mini"><use href="#mini-finder"/></svg></div>
    <div class="thumb"><span class="shot low"></span><svg class="mini"><use href="#mini-finder"/></svg></div>
    <div class="thumb"><span class="shot low"></span><svg class="mini"><use href="#mini-finder"/></svg></div>
    <div class="thumb"><span class="shot"></span><svg class="mini"><use href="#mini-finder"/></svg></div>
    <div class="thumb"><span class="shot low"></span><svg class="mini"><use href="#mini-finder"/></svg></div>
    <div class="thumb"><span class="shot dots"></span><svg class="mini"><use href="#mini-finder"/></svg></div>
    <div class="thumb"><span class="shot"></span><svg class="mini"><use href="#mini-finder"/></svg></div>
    <div class="thumb"><span class="shot low"></span><svg class="mini"><use href="#mini-finder"/></svg></div>
    <div class="thumb"><span class="shot black"></span><span class="mini mini-red"></span></div>
    <div class="thumb"><span class="shot term"></span></div>
    <div class="thumb"><span class="shot calc"></span><span class="mini mini-calc"></span></div>
    <div class="thumb"><span class="shot blank"></span><span class="mini mini-gpt"><svg><use href="#gpt"/></svg></span></div>
    <div class="thumb"><span class="shot phone"></span><svg class="mini"><use href="#mini-preview"/></svg></div>
    <div class="thumb"><span class="shot purple"></span><svg class="mini"><use href="#mini-preview"/></svg></div>
    <div class="thumb"><span class="shot paper"></span><svg class="mini"><use href="#mini-preview"/></svg></div>
    <div class="thumb"><span class="shot sheet"></span><svg class="mini"><use href="#mini-preview"/></svg></div>
    <div class="thumb"><span class="shot tallest"></span><span class="mini mini-orange"></span></div>
    <div class="thumb"><span class="shot blank"></span><span class="mini mini-brave"></span></div>
    <div class="thumb"><span class="shot chat"></span><span class="mini mini-wa"></span></div>
  </div>
  <svg class="trash" viewBox="0 0 28 38"><path d="M1 6c3 2 23 2 26 0l-3 28c-1 4-19 4-20 0z" fill="#8f9394"/><path d="M6 8l2 26M14 9v27M22 8l-2 26" stroke="#a9adae" stroke-width="1.500"/><ellipse cx="14" cy="5" rx="13" ry="4.500" fill="#6f7476"/><path d="M5 6l3-4 3 3 3-4 3 4 3-3 3 4z" fill="#d6d8d9"/></svg>
</footer>
</body>
</html>
```

FILE: styles.css
```css
* { box-sizing: border-box; }
html, body { margin: 0; height: 100%; }
body {
  width: 2880px;
  height: 1800px;
  overflow: hidden;
  display: flex;
  flex-direction: column;
  font-family: Inter, "Liberation Sans", sans-serif;
  background: linear-gradient(90deg, #1b2415 0%, #2a3320 20%, #1c2417 40%, #2d3423 50%, #2b1f17 68%, #2c2a1c 82%, #3a2e20 90%, #15140f 100%);
}
.defs { position: absolute; }

/* menu bar */
.menubar {
  height: 48px;
  flex: none;
  display: flex;
  justify-content: space-between;
  align-items: center;
  color: #fff;
  background: linear-gradient(90deg, #4f5448 0%, #4a4e42 50%, #40443e 100%);
  font-size: 26px;
}
.menu-left { display: flex; align-items: center; gap: 41.700px; padding-left: 41px; margin-top: -3px; letter-spacing: -.4px; }
.apple { width: 27px; height: 31px; color: #fff; margin-top: -1px; margin-right: -2px; }
.menu-app { font-weight: 700; letter-spacing: 0; }
.menu-right { display: flex; align-items: center; padding-right: 37px; }
.status-icons {
  display: grid;
  grid-template-columns: 66px 68px 62px 78px 82px 78px 60px 74px 56px;
  justify-items: center;
  align-items: center;
  color: #f3f3f0;
}
.st { width: 26px; height: 30px; display: block; }
.st-gpt { width: 31px; height: 31px; }
.st-wide { width: 40px; height: 30px; }
.st-batt { width: 52px; height: 28px; }
.siri {
  width: 30px; height: 30px; border-radius: 50%;
  background: conic-gradient(#f28a3c, #ef5a8d, #9a6af0, #52b0f0, #57d6c0, #f4c24d, #f28a3c);
  display: flex; align-items: center; justify-content: center;
}
.siri svg { width: 22px; height: 22px; }
.clock { display: flex; gap: 16px; margin: -3px 0 0 18px; }
.date { letter-spacing: -.2px; }
.time { font-variant-numeric: tabular-nums; letter-spacing: -1px; }

/* window */
.window {
  flex: none;
  height: 1676px;
  margin-top: 2px;
  display: flex;
  flex-direction: column;
  border-radius: 20px;
  overflow: hidden;
  box-shadow: 0 2px 6px #000;
  position: relative;
}
.tabstrip {
  height: 80px;
  flex: none;
  display: flex;
  background: #41363c;
  box-shadow: inset 0 2px 0 #7c7177;
  padding: 12px 12px 0 42px;
}
.lights { display: flex; gap: 16px; padding-top: 16px; }
.light { width: 24px; height: 24px; border-radius: 50%; }
.red { background: #ee6a5f; }
.yellow { background: #f5bf4f; }
.green { background: #61c554; }
.tabs { display: flex; margin-left: 37px; color: #fff; }
.tab {
  position: relative;
  width: 464px;
  height: 68px;
  display: flex;
  align-items: center;
  gap: 16px;
  padding: 0 22px 12px 17px;
  font-size: 24px;
}
.tab.active { background: #65545c; border-radius: 18px 18px 0 0; }
.tab.active::before, .tab.active::after {
  content: "";
  position: absolute;
  bottom: 0;
  width: 18px;
  height: 18px;
}
.tab.active::before { left: -18px; background: radial-gradient(circle at 0 0, transparent 18px, #65545c 18.500px); }
.tab.active::after { right: -18px; background: radial-gradient(circle at 100% 0, transparent 18px, #65545c 18.500px); }
.fav { width: 32px; height: 32px; flex: none; }
.gh-mark { color: #fff; }
.tab-title { flex: 1; white-space: nowrap; }
.fade {
  letter-spacing: -.15px;
  -webkit-mask-image: linear-gradient(90deg, #000 84%, rgba(0,0,0,.15) 97%, transparent 100%);
  mask-image: linear-gradient(90deg, #000 84%, rgba(0,0,0,.15) 97%, transparent 100%);
}
.close { width: 18px; height: 18px; flex: none; color: #fff; }
.tab-sep { width: 2px; height: 32px; margin: 12px 5px 0; background: #6d5f66; flex: none; }
.tab-sep.off { background: transparent; }
.newtab { width: 22px; height: 22px; margin: 17px 0 0 29px; flex: none; }
.tabsearch {
  margin-left: auto;
  width: 55px; height: 56px;
  border-radius: 20px;
  background: #65545c;
  display: flex; align-items: center; justify-content: center;
}
.tabsearch svg { width: 18px; height: 14px; }

/* toolbar */
.toolbar {
  height: 80px;
  flex: none;
  display: flex;
  padding: 12px 10px 0 28px;
  background: #64535b;
  border-radius: 18px 18px 0 0;
}
.nav { display: flex; align-items: center; gap: 40px; }
.nav svg { width: 32px; height: 32px; }
.omnibox {
  flex: 1;
  margin: 0 16px 0 36px;
  border-radius: 34px;
  background: #4f444b;
  display: flex;
  align-items: center;
  gap: 16px;
  padding: 0 32px 0 10px;
  color: #fff;
  font-size: 28px;
}
.chip {
  width: 48px; height: 48px; border-radius: 50%;
  background: #5e5259;
  display: flex; align-items: center; justify-content: center;
}
.chip svg { width: 28px; height: 28px; }
.url { flex: 1; }
.port { color: #bdb5b9; }
.omni-icon { width: 32px; height: 32px; margin-left: 16px; }
.tools {
  display: grid;
  grid-template-columns: 72px 74px 32px 76px 68px;
  justify-items: center;
  align-items: center;
}
.tools > svg { width: 32px; height: 36px; }
.tools > .kebab { width: 8px; height: 32px; }
.tool-div { width: 3px; height: 32px; background: #4b3f45; border-radius: 2px; }
.avatar {
  width: 40px; height: 40px; border-radius: 50%;
  background: #3f95a8; color: #fff;
  display: flex; align-items: center; justify-content: center;
  font-size: 22px;
}

/* bookmarks */
.bookmarks {
  height: 82px;
  flex: none;
  display: flex;
  align-items: center;
  padding: 0 0 2px 38px;
  background: #64535b;
  border-bottom: 2px solid #7d7076;
  color: #fff;
  font-size: 24px;
  letter-spacing: -.15px;
}
.apps { width: 28px; height: 28px; flex: none; }
.bm-div { width: 3px; height: 32px; background: #463b41; margin: 0 31px; flex: none; }
.bm { width: 308px; flex: none; display: flex; align-items: center; gap: 13px; white-space: nowrap; }
.bm-first { width: 211px; }
.bm-short { width: 305px; }
.bm-oracle { width: 259px; }
.bm-last { letter-spacing: 0; }
.bm-ic { width: 30px; height: 32px; flex: none; }
.apna { width: 28px; display: flex; flex-direction: column; align-items: center; font-size: 7px; font-weight: 700; line-height: 8px; letter-spacing: -.3px; }
.apna-top { color: #111; }
.apna-bot { color: #e8a33a; }
.disc { width: 32px; height: 32px; border-radius: 50%; background: conic-gradient(#5c5c5c, #d4d4d4, #6a6a6a, #c9c9c9, #555, #d4d4d4, #5c5c5c); flex: none; }
.oracle { width: 32px; height: 32px; background: #b84e3c; border-radius: 3px; flex: none; display: flex; }
.oracle svg { width: 32px; height: 32px; }

/* page */
.page {
  flex: 1;
  text-align: center;
  background: linear-gradient(#fff calc(100% - 72px), #e4e4e4);
  font-family: "Liberation Sans", Arial, sans-serif;
  color: #000;
  padding-top: 100px;
}
.title {
  margin: 0;
  font-family: Inter, "Liberation Sans", sans-serif;
  font-size: 48px;
  font-weight: 700;
  line-height: 58px;
  letter-spacing: -1.250px;
  color: #f0341f;
}
.form { font-size: 32px; letter-spacing: .2px; margin-top: 39px; }
.row-name { margin-bottom: 38px; }
.row-complaint { margin-bottom: 38px; }
.field {
  width: 292px; height: 43px;
  border: 2px solid #767676; border-radius: 5px;
  padding: 2px 4px;
  margin: 0 0 0 -2px;
  font: 26.670px "Liberation Sans", sans-serif;
  background: #fff;
}
.area {
  width: 365px; height: 74px;
  border: 2px solid #767676; border-radius: 5px;
  padding: 4px;
  margin: 0 0 0 -2px;
  font: 26.670px "Liberation Mono", monospace;
  background: #fff;
}
.submit {
  width: 114px; height: 43px;
  border: 2px solid #767676; border-radius: 5px;
  background: #efefef;
  font: 26.670px "Liberation Sans", sans-serif;
  color: #000;
  padding: 0;
  display: block;
  margin: 0 auto;
}

/* dock */
.dock {
  flex: none;
  width: 2822px;
  height: 60px;
  margin: 4px 0 0 29px;
  border: 2px solid #50534a;
  border-radius: 18px;
  background: linear-gradient(90deg, #262a22 0%, #1f2019 50%, #2a2a25 100%);
  display: flex;
  gap: 12px;
  padding: 8px 6px 0 7px;
  align-items: flex-start;
}
.item { position: relative; width: 32px; display: flex; flex-direction: column; align-items: center; gap: 8px; flex: none; }
.item.tight { margin-left: -2px; }
.ic { width: 32px; height: 32px; display: block; }
.ic-round { width: 34px; height: 34px; margin: -1px -1px -1px; }
.item i { width: 6px; height: 6px; border-radius: 50%; background: #9a9c95; }
.item i.off { background: transparent; }
.badge {
  position: absolute; top: -4px; right: -6px;
  width: 16px; height: 16px; border-radius: 50%;
  background: #e0443c; color: #fff;
  font-size: 9px; line-height: 16px; text-align: center;
}
.dock-sep { width: 2px; height: 44px; background: #777970; margin: 0 2px; flex: none; }
.dock-sep.wide { margin: 0 3px 0 4px; }
.zipdoc { width: 26px; height: 36px; flex: none; margin-top: -2px; }
.cal-m { font: 700 6px Inter, sans-serif; fill: #fff; }
.cal-d { font: 400 18px Inter, sans-serif; fill: #222; }
.tv { font: 500 12px Inter, sans-serif; fill: #fff; }
.tile-l { font: 700 9px Inter, sans-serif; fill: #fff; }

.thumbs { display: flex; gap: 5.430px; flex: none; margin-top: -3px; }
.thumb {
  position: relative;
  width: 38px; height: 38px;
  flex: none;
  display: flex;
  align-items: center;
  justify-content: center;
}
.shot {
  display: block;
  width: 38px; height: 18px;
  background:
    repeating-linear-gradient(#4a4a45 0 1px, transparent 1px 3px) 3px 4px / 14px 10px no-repeat,
    repeating-linear-gradient(#444440 0 1px, transparent 1px 4px) 22px 6px / 12px 10px no-repeat,
    #30302c;
}
.shot.low { height: 15px; }
.shot.lower { height: 12px; }
.shot.dense { background: repeating-linear-gradient(#5c5c56 0 1px, transparent 1px 3px) 2px 2px / 34px 14px no-repeat, #30302c; }
.shot.dots { height: 15px; background: repeating-linear-gradient(90deg, #cfcfcf 0 2px, transparent 2px 7px) 3px 2px / 32px 4px no-repeat, repeating-linear-gradient(90deg, #cfcfcf 0 2px, transparent 2px 7px) 3px 9px / 32px 4px no-repeat, #232320; }
.shot.black { height: 28px; background: #060606; }
.shot.term { height: 26px; border: 2px solid #a5a7a3; background: repeating-linear-gradient(#c9c9c5 0 1px, transparent 1px 3px) 2px 2px / 26px 18px no-repeat, #1c1c1a; }
.shot.calc { width: 28px; height: 36px; background: repeating-linear-gradient(#7d7d78 0 5px, #2a2a27 5px 7px) 2px 8px / 24px 26px no-repeat, #2a2a27; }
.shot.blank { height: 26px; background: linear-gradient(#2e2e2c 30%, #3b3b38); }
.shot.phone { height: 35px; background: linear-gradient(#1a1a18, #050505) 12px 3px / 14px 29px no-repeat, #2d2d2a; }
.shot.purple { background: radial-gradient(circle at 50% 70%, #8d6ad0, #10101c 60%) 8px 2px / 22px 14px no-repeat, #26262a; }
.shot.paper { height: 33px; background: repeating-linear-gradient(#6a5e50 0 1px, transparent 1px 4px) 6px 6px / 26px 22px no-repeat, #e8dfcf; }
.shot.sheet { height: 26px; background: repeating-linear-gradient(90deg, #7fb6e0 0 5px, #fff 5px 6px) 3px 4px / 32px 8px no-repeat, repeating-linear-gradient(#ddd 0 1px, transparent 1px 4px) 3px 13px / 32px 10px no-repeat, #fff; }
.shot.tallest { height: 38px; background: repeating-linear-gradient(#55554f 0 1px, transparent 1px 4px) 3px 4px / 32px 30px no-repeat, #1f1f1c; }
.shot.chat { height: 32px; background: repeating-linear-gradient(#3e7a50 0 1px, transparent 1px 4px) 10px 3px / 26px 26px no-repeat, #1a1f1b; }
.mini { position: absolute; right: 1px; bottom: 2px; width: 12px; height: 12px; display: block; }
.mini-red { background: #d4302a; border-radius: 3px; }
.mini-calc { background: #cfcfcd; border-radius: 3px; }
.mini-gpt { background: #eef1f5; border-radius: 3px; color: #222; display: flex; align-items: center; }
.mini-gpt svg { width: 12px; height: 12px; }
.mini-orange { background: #ef7a47; border-radius: 3px; }
.mini-brave { background: #e9552e; border-radius: 3px; box-shadow: 0 0 0 1px #f4f4f4 inset; }
.mini-wa { background: #48c95f; border-radius: 3px; }
.trash { width: 28px; height: 38px; flex: none; margin-top: -3px; }
```
